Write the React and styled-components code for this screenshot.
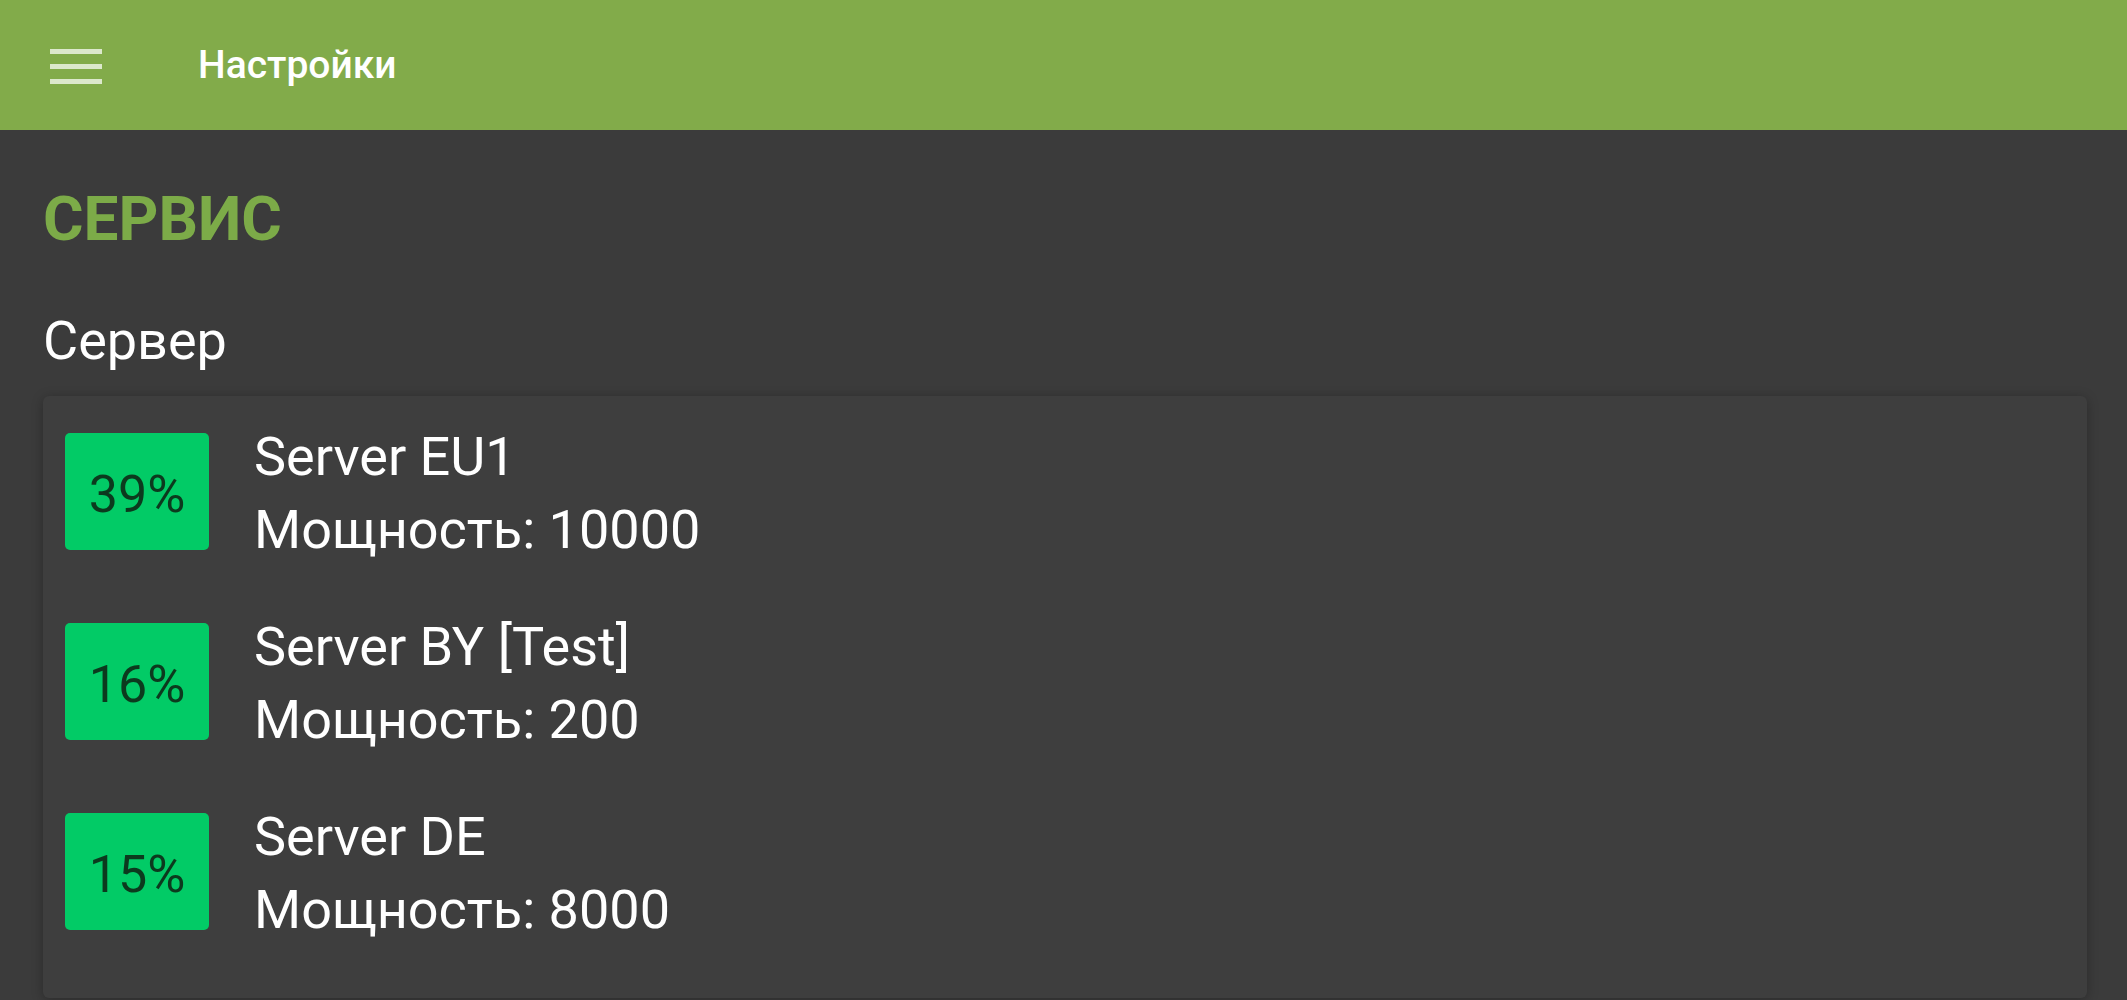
import React from 'react';
import styled, { createGlobalStyle } from 'styled-components';

const GlobalStyle = createGlobalStyle`
  html, body {
    margin: 0;
    padding: 0;
    background: #3b3b3b;
    font-family: Roboto, "Noto Sans", "Liberation Sans", sans-serif;
  }
`;

const Page = styled.div`
  min-height: 100vh;
  background: #3b3b3b;
  overflow: hidden;
`;

const AppBar = styled.header`
  height: 130px;
  background: #82ab4a;
  display: flex;
  align-items: center;
  padding-left: 50px;
  box-sizing: border-box;
`;

const MenuButton = styled.div`
  width: 52px;
  display: flex;
  flex-direction: column;
  gap: 10px;
  margin-top: 2px;

  span {
    display: block;
    height: 5px;
    background: rgba(255, 255, 255, 0.72);
  }
`;

const Title = styled.h1`
  margin: 0 0 0 96px;
  font-size: 39px;
  font-weight: 500;
  color: #ffffff;
`;

const Content = styled.main`
  padding: 52px 40px 0 43px;
`;

const SectionTitle = styled.h2`
  margin: 0;
  font-size: 62px;
  font-weight: 700;
  line-height: normal;
  color: #7cab48;
`;

const FieldLabel = styled.div`
  margin-top: 54px;
  font-size: 54px;
  line-height: normal;
  color: #ffffff;
`;

const Card = styled.div`
  margin-top: 24px;
  background: #3e3e3e;
  border-radius: 6px;
  box-shadow: 0 2px 12px rgba(0, 0, 0, 0.28);
  padding-bottom: 32px;
`;

const Row = styled.div`
  display: flex;
  align-items: center;
  padding: 22px 22px;
`;

const Badge = styled.div`
  width: 144px;
  height: 117px;
  flex: none;
  border-radius: 5px;
  background: ${p => p.$color};
  color: #0c3a1e;
  font-size: 52px;
  display: flex;
  align-items: center;
  justify-content: center;
  padding-top: 6px;
  box-sizing: border-box;
`;

const Info = styled.div`
  margin: 2px 0 -2px 45px;
  color: #ffffff;
  font-size: 54px;
  line-height: 73px;
`;

const servers = [
  { load: 39, name: 'Server EU1', power: 10000 },
  { load: 16, name: 'Server BY [Test]', power: 200 },
  { load: 15, name: 'Server DE', power: 8000 },
];

export default function App() {
  return (
    <Page>
      <GlobalStyle />
      <AppBar>
        <MenuButton>
          <span />
          <span />
          <span />
        </MenuButton>
        <Title>Настройки</Title>
      </AppBar>
      <Content>
        <SectionTitle>СЕРВИС</SectionTitle>
        <FieldLabel>Сервер</FieldLabel>
        <Card>
          {servers.map(s => (
            <Row key={s.name}>
              <Badge $color="#02cb66">{s.load}%</Badge>
              <Info>
                <div>{s.name}</div>
                <div>Мощность: {s.power}</div>
              </Info>
            </Row>
          ))}
        </Card>
      </Content>
    </Page>
  );
}
